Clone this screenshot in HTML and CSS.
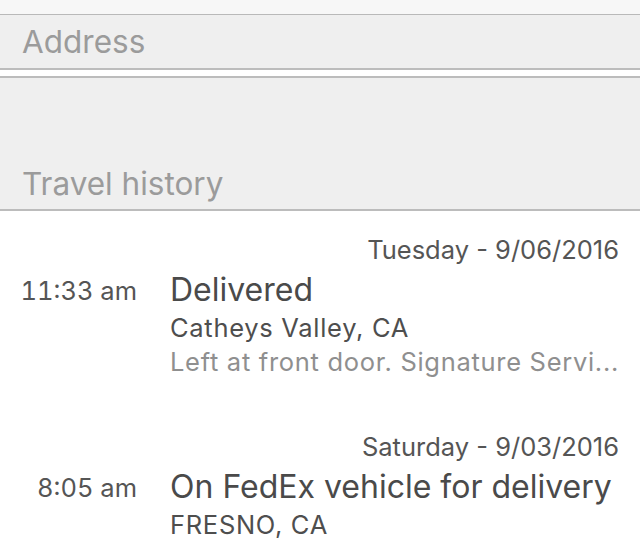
FILE: index.html
```html
<!DOCTYPE html>
<html>
<head>
<meta charset="utf-8">
<link rel="stylesheet" href="styles.css">
</head>
<body>
<div class="top-strip"></div>
<div class="section address">
  <div class="section-title">Address</div>
</div>
<div class="spacer"></div>
<div class="section history">
  <div class="section-title">Travel history</div>
</div>
<div class="events">
  <div class="event">
    <div class="date">Tuesday - 9/06/2016</div>
    <div class="row">
      <div class="time">11:33 am</div>
      <div class="details">
        <div class="status">Delivered</div>
        <div class="place">Catheys Valley, CA</div>
        <div class="note">Left at front door. Signature Servi...</div>
      </div>
    </div>
  </div>
  <div class="event">
    <div class="date">Saturday - 9/03/2016</div>
    <div class="row">
      <div class="time">8:05 am</div>
      <div class="details">
        <div class="status">On FedEx vehicle for delivery</div>
        <div class="place">FRESNO, CA</div>
      </div>
    </div>
  </div>
</div>
</body>
</html>
```
FILE: styles.css
```css
html, body {
  margin: 0;
  padding: 0;
  background: #ffffff;
  font-family: Inter, Roboto, "Liberation Sans", sans-serif;
  width: 640px;
  height: 551px;
  overflow: hidden;
}
.top-strip {
  height: 14px;
  background: #f7f7f7;
  border-bottom: 1px solid #b9b9b9;
}
.section {
  background: #efefef;
  border-bottom: 2px solid #bcbcbc;
  box-sizing: border-box;
  display: flex;
  align-items: flex-end;
  padding-left: 22px;
}
.address {
  height: 55px;
  padding-bottom: 7px;
}
.spacer {
  height: 6px;
  background: #ffffff;
  border-bottom: 2px solid #bcbcbc;
}
.history {
  height: 133px;
  padding-bottom: 6px;
}
.section-title {
  color: #9b9b9b;
  font-size: 31.5px;
  line-height: 38px;
}
.events {
  padding-top: 22px;
}
.event {
  margin-bottom: 51px;
}
.date {
  text-align: right;
  padding-right: 21px;
  color: #555555;
  font-size: 25.5px;
  line-height: 34px;
}
.row {
  display: flex;
  gap: 33px;
}
.time {
  width: 137px;
  flex: none;
  text-align: right;
  color: #555555;
  font-size: 25.5px;
  font-variant-numeric: tabular-nums;
  line-height: 40px;
  padding-top: 4px;
}
.details {
  flex: 1;
  min-width: 0;
}
.status {
  color: #4a4a4a;
  font-size: 32px;
  line-height: 42px;
  padding-top: 2px;
}
.place {
  color: #4e4e4e;
  font-size: 25.5px;
  letter-spacing: 0.7px;
  line-height: 34px;
}
.note {
  color: #8f8f8f;
  font-size: 25.5px;
  letter-spacing: 0.7px;
  line-height: 34px;
  white-space: nowrap;
}
```
